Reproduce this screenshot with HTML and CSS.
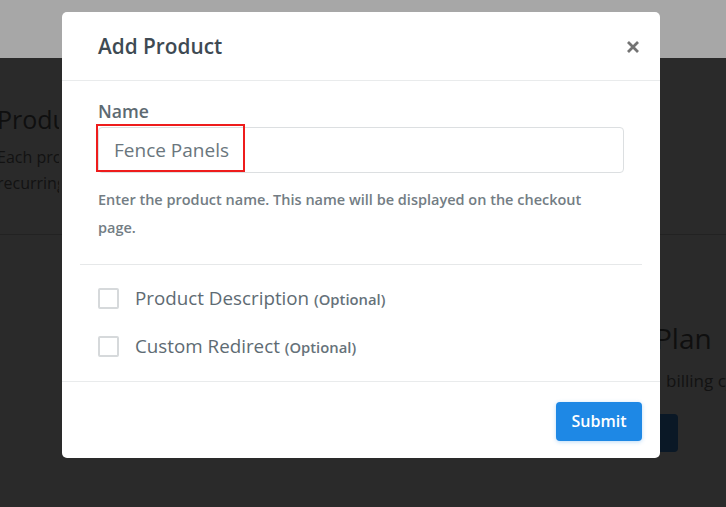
FILE: index.html
```html
<!DOCTYPE html>
<html>
<head>
<meta charset="utf-8">
<link rel="stylesheet" href="styles.css">
</head>
<body>
<div class="page">
  <div class="topbar"></div>
  <div class="content">
    <div class="section">
      <div class="col-left">
        <h2 class="bg-title">Products</h2>
        <p class="bg-text">Each product<br>recurring</p>
      </div>
    </div>
    <div class="section2">
      <div class="col-right">
        <h2 class="bg-title big">Plan</h2>
        <p class="bg-text">billing cycle</p>
        <div class="bg-btn"></div>
      </div>
    </div>
  </div>

  <div class="modal">
    <div class="modal-header">
      <h3 class="modal-title">Add Product</h3>
      <svg class="close" width="14" height="14" viewBox="0 0 14 14"><path d="M2 2 L12 12 M12 2 L2 12" stroke="#747474" stroke-width="2.8" stroke-linecap="butt"/></svg>
    </div>
    <div class="modal-body">
      <div class="field">
        <label class="label">Name</label>
        <div class="input-wrap">
          <div class="input">Fence Panels</div>
          <div class="highlight"></div>
        </div>
        <p class="help">Enter the product name. This name will be displayed on the checkout page.</p>
      </div>
      <div class="options">
        <div class="check-row"><span class="box"></span><span class="check-label">Product Description <small>(Optional)</small></span></div>
        <div class="check-row"><span class="box"></span><span class="check-label">Custom Redirect <small>(Optional)</small></span></div>
      </div>
    </div>
    <div class="modal-footer">
      <button class="submit">Submit</button>
    </div>
  </div>
</div>
</body>
</html>
```

FILE: styles.css
```css
* { box-sizing: border-box; }
html, body { margin: 0; padding: 0; }
body {
  width: 726px;
  height: 507px;
  overflow: hidden;
  background: #2a2a2a;
  font-family: "Open Sans", sans-serif;
}
.page { position: relative; width: 726px; height: 507px; overflow: hidden; }
.topbar { height: 58px; background: #a7a7a7; }
.content { display: flex; flex-direction: column; }
.section {
  height: 177px;
  border-bottom: 1px solid #222;
  padding: 46px 0 0 0;
}
.col-left { width: 62px; overflow: hidden; white-space: nowrap; margin-left: -3px; }
.bg-title {
  margin: 0;
  font-family: "Open Sans", sans-serif;
  font-weight: 400;
  font-size: 25px;
  line-height: 30px;
  color: #0f0f0f;
}
.bg-text {
  margin: 10px 0 0 0;
  font-family: "Open Sans", sans-serif;
  font-size: 16px;
  line-height: 26px;
  color: #121212;
  white-space: nowrap;
}
.section2 { padding-top: 86px; }
.col-right {
  margin-left: 655px;
  display: flex;
  flex-direction: column;
  align-items: flex-start;
  white-space: nowrap;
}
.bg-title.big { font-size: 28px; line-height: 34px; }
.section2 .bg-text { margin: 14px 0 0 11px; font-size: 17px; line-height: 24px; }
.bg-btn {
  margin-top: 21px;
  margin-left: -97px;
  width: 120px;
  height: 38px;
  background: #0a1826;
  border-radius: 4px;
}

.modal {
  position: absolute;
  left: 62px;
  top: 12px;
  width: 598px;
  height: 446px;
  background: #fff;
  border-radius: 5px;
  display: flex;
  flex-direction: column;
}
.modal-header {
  height: 69px;
  border-bottom: 1px solid #e9ebec;
  display: flex;
  align-items: center;
  justify-content: space-between;
  padding: 0 20px 0 36px;
}
.modal-title {
  margin: 0;
  font-size: 20.8px;
  font-weight: 600;
  color: #3e4a53;
}
.close { display: block; margin-top: 1px; }
.modal-body { padding: 0 18px; flex: 1; }
.field { padding: 19px 18px 22px; border-bottom: 1px solid #e6e8e9; }
.label {
  display: block;
  font-size: 17.6px;
  font-weight: 600;
  color: #5d6a72;
  line-height: 22px;
}
.input-wrap { position: relative; margin-top: 5px; }
.input {
  height: 46px;
  border: 1px solid #dcdfe1;
  border-radius: 4px;
  padding: 0 15px;
  display: flex;
  align-items: center;
  font-size: 19px;
  color: #6a767d;
}
.highlight {
  position: absolute;
  left: -2px;
  top: -3px;
  width: 149px;
  height: 48px;
  border: 2px solid #ee1c1c;
}
.help {
  margin: 13px 0 0 0;
  font-size: 14.5px;
  font-weight: 600;
  color: #737d84;
  line-height: 28px;
  padding-right: 30px;
}
.options { padding: 9px 18px 0; display: flex; flex-direction: column; }
.check-row { display: flex; align-items: center; height: 48px; }
.box {
  width: 21px;
  height: 21px;
  border: 2px solid #d6d9db;
  border-radius: 2px;
  margin-right: 16px;
}
.check-label { font-size: 18.8px; color: #5e6b73; }
.check-label small { font-size: 14.8px; font-weight: 600; color: #66727a; }
.modal-footer {
  height: 77px;
  border-top: 1px solid #e9ebec;
  display: flex;
  align-items: center;
  justify-content: flex-end;
  padding: 0 18px;
}
.submit {
  width: 86px;
  height: 39px;
  border: none;
  border-radius: 4px;
  background: #1e88e5;
  color: #fff;
  font-family: "Open Sans", sans-serif;
  font-size: 16px;
  font-weight: 600;
  box-shadow: 0 1px 4px rgba(30,136,229,0.3);
  margin-top: 2px;
}
```
